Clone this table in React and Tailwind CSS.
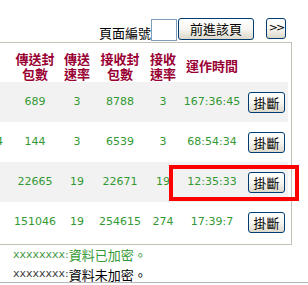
const rows = [
  { lead: '', sent: '689', sRate: '3', recv: '8788', rRate: '3', time: '167:36:45', shade: true },
  { lead: '1234', sent: '144', sRate: '3', recv: '6539', rRate: '3', time: '68:54:34', shade: false },
  { lead: '', sent: '22665', sRate: '19', recv: '22671', rRate: '19', time: '12:35:33', shade: true },
  { lead: '', sent: '151046', sRate: '19', recv: '254615', rRate: '274', time: '17:39:7', shade: false },
]

const cjk = "font-['Noto_Sans_CJK_TC','Noto_Sans_CJK_SC',sans-serif]"
const xpButton =
  'border border-[#003c74] rounded-[3px] bg-linear-to-b from-white via-[#f7f6f1] to-[#dcd9cb] text-black flex items-center justify-center'

function HangUp() {
  return (
    <button className={`${xpButton} ${cjk} w-[37px] h-[21px] text-[13px] leading-none`}>掛斷</button>
  )
}

export default function App() {
  return (
    <div className="relative w-[308px] h-[285px] overflow-hidden bg-white">
      {/* paging bar */}
      <div className={`flex items-start justify-end h-[42px] pr-[22px] ${cjk} text-[13px] text-black`}>
        <span className="mt-[26px] leading-[13px]">頁面編號</span>
        <input className="mt-[19px] w-[26px] h-[22px] border border-[#7f9db9] bg-white outline-none" />
        <button className={`${xpButton} ml-px mt-[18px] w-[76px] h-[22px] text-[13px]`}>前進該頁</button>
        <button className={`${xpButton} ml-[12px] mt-[18px] w-[20px] h-[21px] text-[11px] font-['DejaVu_Sans',sans-serif] tracking-[-2px]`}>
          &gt;&gt;
        </button>
      </div>

      {/* connection table */}
      <div className="-ml-[61px] w-[353px] border border-[#c4c2b6] px-[3px] pt-[3px] pb-[2px] bg-white">
        <div className={`flex h-[36px] pt-[3px] items-center text-center text-[13px] leading-[15px] font-bold text-[#990033] ${cjk}`}>
          <div className="w-[65px]"></div>
          <div className="w-[54px]">傳送封<br />包數</div>
          <div className="w-[30px]">傳送<br />速率</div>
          <div className="w-[56px]">接收封<br />包數</div>
          <div className="w-[30px]">接收<br />速率</div>
          <div className="w-[68px]">運作時間</div>
          <div className="w-[42px]"></div>
        </div>
        {rows.map((r, i) => (
          <div
            key={i}
            className={`flex h-[40px] items-center text-[11px] text-[#339933] font-['DejaVu_Sans',sans-serif] ${r.shade ? 'bg-[#f2f2f2]' : 'bg-white'}`}
          >
            <div className="w-[65px] text-right pr-[5px]">{r.lead}</div>
            <div className="w-[54px] text-center">{r.sent}</div>
            <div className="w-[30px] text-center">{r.sRate}</div>
            <div className="w-[56px] text-center">{r.recv}</div>
            <div className="w-[30px] text-center">{r.rRate}</div>
            <div className="w-[68px] text-center">{r.time}</div>
            <div className="w-[42px] pl-[2px]">
              <HangUp />
            </div>
          </div>
        ))}
      </div>

      {/* legend */}
      <div className="pl-[13px]">
        <div className="h-[20px] flex items-center">
          <span className="font-['DejaVu_Sans',sans-serif] text-[11px] text-[#4a9a4a]">xxxxxxxx:</span>
          <span className={`${cjk} text-[13px] text-[#339933]`}>資料已加密。</span>
        </div>
        <div className="h-[17px] pt-[2px] flex items-center">
          <span className="font-['DejaVu_Sans',sans-serif] text-[11px] text-[#444]">xxxxxxxx:</span>
          <span className={`${cjk} text-[13px] text-black`}>資料未加密。</span>
        </div>
      </div>
      <div className="border-t border-[#b8b8b8]"></div>

      {/* highlight annotation */}
      <div className="absolute left-[169px] top-[165px] w-[130px] h-[36px] border-4 border-[#ff0000]"></div>
    </div>
  )
}
